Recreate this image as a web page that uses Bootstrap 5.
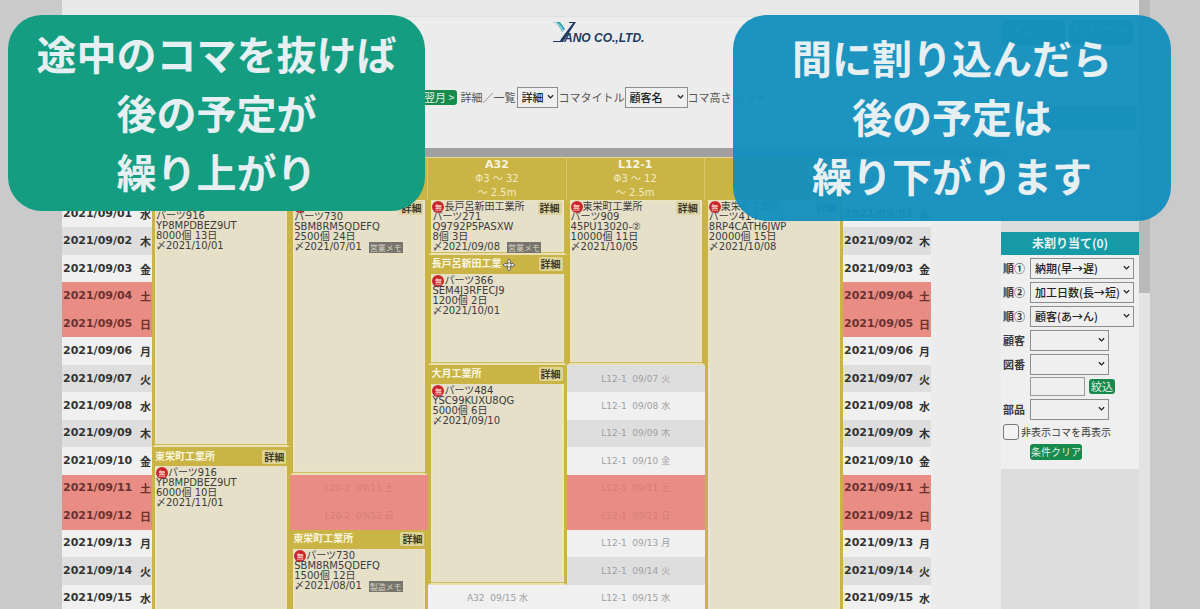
<!DOCTYPE html>
<html lang="ja">
<head>
<meta charset="utf-8">
<meta name="viewport" content="width=device-width, initial-scale=1">
<title>YANO CO.,LTD. 生産予定表</title>
<link href="https://cdn.jsdelivr.net/npm/bootstrap@5.3.0/dist/css/bootstrap.min.css" rel="stylesheet">
<script src="https://cdn.jsdelivr.net/npm/bootstrap@5.3.0/dist/js/bootstrap.bundle.min.js"></script>
<style>
:root { --gold: #c9b445; --cream: #e6e0c9; --weekend: #e98c83; --jp: "Noto Sans CJK JP", sans-serif; }
body { background: #cacaca; font-family: "DejaVu Sans", var(--jp); font-size: 11px; line-height: 16px; color: #3c3c3c; }
.page-frame { margin: 0 50px 0 62px; }
.page-body { background: #ececec; }
.scroll-track { width: 11px; background: #e3e3e3; }
.scroll-thumb { height: 293px; background: #b9b9b9; }
.browser-strip { height: 17px; background: #e8e8e8; border-bottom: 1px solid #e0e0e0; }
.site-head { height: 131px; }
.logo { width: 92px; height: 24px; top: 4px; left: 490px; }
.head-btns { top: 3px; right: 6px; }
.head-btns .btn { width: 64px; height: 25px; font-size: 11px; background: #3f8f7a; border-color: #3f8f7a; }
.tool-row { left: 360px; top: 69px; font-family: var(--jp); height: 22px; color: #555; white-space: nowrap; }
.btn-go { background: #178a4e; color: #e4f0e6; font-family: var(--jp); font-size: 11px; line-height: 15px; padding: 0 2px; border: 0; border-radius: 3px; }
.pick { appearance: none; border: 1px solid #8d8d8d; border-radius: 0; color: #222; height: 21px; padding: 0 12px 0 4px; font-family: var(--jp); font-size: 11px; font-weight: 500; line-height: 16px;
  background: #efefef url("data:image/svg+xml,%3Csvg xmlns='http://www.w3.org/2000/svg' viewBox='0 0 8 6'%3E%3Cpath d='M1 1l3 3 3-3' fill='none' stroke='%23222' stroke-width='1.5'/%3E%3C/svg%3E") no-repeat right 3px center / 7px 6px; }
.pick-mode { width: 41px; margin: 0 1px; }
.pick-title { width: 63px; }
.pick-height { width: 36px; padding-left: 1px; border-color: #ececec; background-color: #ececec; color: #777; }
.plan { border-top: 9px solid #a0a0a0; padding-right: 70px; }
.plan-grid { display: grid; grid-template-columns: 90px repeat(5, minmax(0, 1fr)) 88px; }
.machine { background: var(--gold); color: #f1ebc5; height: 43px; border-top: 1px solid #e2d89b; border-right: 1px solid #d6c76f; text-align: center; font-size: 10px; line-height: 14px; }
.machine b { display: block; font-size: 11px; line-height: 14px; color: #f7f4e2; }
.lane { display: grid; grid-template-rows: repeat(15, minmax(0, 1fr)); height: 412px; }
.day { background: #f0f0f0; color: #333; font-size: 11px; font-weight: 700; padding: 0 1px; }
.day span { font-family: var(--jp); font-size: 11px; line-height: 14px; }
.day.alt, .slot.alt { background: #dedede; }
.day.off, .slot.off { background: var(--weekend); }
.day.off { color: #6b3230; }
.slot { background: #f0f0f0; color: #a0a0a0; font-size: 9px; white-space: pre; }
.slot.off { color: #d67f78; }
.job { background: var(--cream); border: solid var(--gold); border-width: 0 3px 2px; border-bottom-color: #e9e1b3; box-shadow: inset 0 -1px 0 #cdbb5e, inset 0 0 0 2px #ebe4c4; font-size: 10px; line-height: 10px; overflow: hidden; min-height: 0; }
.job-head { background: var(--gold); height: 19px; color: #faf6e0; font-weight: 700; padding: 0 1px 0 0; }
.job-text { padding: 1px 0 0 1px; white-space: nowrap; }
.job-open { border: 0; border-radius: 2px; background: #dfd498; color: #3d3929; font: 700 10px/14px var(--jp); padding: 0 2px; }
.job-first .job-open { float: right; margin: 1px 2px 0 0; background: #dcd3a4; }
.stamp { display: inline-block; width: 12px; height: 12px; margin: 0 0 -4px; border-radius: 50%; background: #c9252b; color: #f3b9b5; font: 700 7px/12px var(--jp); text-align: center; }
.memo { display: inline-block; background: #77756b; color: #d5d2c4; font: 8px/11px var(--jp); padding: 0 1px; margin-left: 7px; vertical-align: top; }
.move-mark { width: 12px; height: 12px; left: 72px; top: 4px; }
.side { width: 138px; background: #dddddd; }
.side-gap { height: 84px; }
.side-title { background: #169aa5; color: #e5f3f3; height: 23px; font: 700 12px/22px var(--jp); text-align: center; margin: 0; }
.side-form { background: #efefef; height: 214px; font-family: var(--jp); padding: 1px 2px 0; }
.side-form .field { display: grid; grid-template-columns: 27px auto; justify-content: start; align-items: center; height: 24px; font-weight: 700; }
.side-form .field-short { height: 21px; }
.side-form .wide { width: 104px; }
.side-form .mid { width: 79px; }
.side-form input[type=text] { width: 55px; height: 19px; border: 1px solid #9a9a9a; background: #efefef; }
.side-form input[type=checkbox] { width: 16px; height: 16px; margin: 0 2px 0 0; border: 1px solid #777; border-radius: 3px; appearance: none; background: #f3f3f3; }
.side-form .check-row { height: 22px; font-size: 10px; }
.side-form .clear-btn { margin-left: 27px; font-size: 10px; line-height: 16px; padding: 0 1px; }
.tail-bar { top: 106px; right: 2px; width: 106px; height: 24px; background: #6fa5a0; }
.callouts { top: 15px; padding: 0 29px 0 8px; gap: 308px; pointer-events: none; }
.callout { border-radius: 34px; color: #e6eff2; font: 700 40px/59px var(--jp); text-align: center; white-space: nowrap; margin: 0; }
.callout-up { flex: 417 1 0; height: 196px; padding-top: 9px; background: #149d80; }
.callout-down { flex: 438 1 0; height: 206px; padding-top: 13px; background: rgba(20, 144, 189, .96); }
</style>
</head>
<body>
<div class="position-relative vh-100 overflow-hidden">
  <div class="page-frame d-flex">
    <div class="page-body flex-grow-1 position-relative">
      <div class="browser-strip"></div>
      <div class="tail-bar position-absolute"></div>
      <header class="site-head position-relative">
        <svg class="logo position-absolute" viewBox="0 0 92 24" role="img" aria-label="YANO CO.,LTD.">
          <path d="M1 1h7l5 7-3 3C8 6 5 2 1 1z" fill="#2ba7b5"/><path d="M3 1c4 2 6 5 8 9" stroke="#ececec" fill="none"/>
          <path d="M24 1h-7v1h4L9 18l-1 2H1v1h10L24 1z" fill="#203a63"/>
          <text x="12" y="21" font-family="Liberation Sans, sans-serif" font-style="italic" font-weight="700" font-size="12" fill="#203a63">ANO CO.,LTD.</text>
        </svg>
        <div class="head-btns position-absolute d-flex gap-1"><button class="btn btn-success p-0">メニュー</button><button class="btn btn-success p-0">ログアウト</button></div>
        <div class="tool-row position-absolute d-flex align-items-center">
          <button class="btn-go me-1">翌月 &gt;</button>
          <label for="mode">詳細／一覧</label><select id="mode" class="pick pick-mode"><option>詳細</option></select>
          <label for="ttl">コマタイトル</label><select id="ttl" class="pick pick-title"><option>顧客名</option></select>
          <label for="hgt">コマ高さ</label><select id="hgt" class="pick pick-height"><option>ット</option></select>
        </div>
      </header>
      <main class="d-flex">
        <section class="plan flex-grow-1">
          <div class="plan-grid" id="plan"></div>
        </section>
        <aside class="side">
          <div class="side-gap"></div>
          <h2 class="side-title">未割り当て(0)</h2>
          <form class="side-form">
            <div class="field"><label for="s1">順①</label><select id="s1" class="pick wide"><option>納期(早→遅)</option></select></div>
            <div class="field"><label for="s2">順②</label><select id="s2" class="pick wide"><option>加工日数(長→短)</option></select></div>
            <div class="field"><label for="s3">順③</label><select id="s3" class="pick wide"><option>顧客(あ→ん)</option></select></div>
            <div class="field"><label for="s4">顧客</label><select id="s4" class="pick mid"><option></option></select></div>
            <div class="field"><label for="s5">図番</label><select id="s5" class="pick mid"><option></option></select></div>
            <div class="field field-short"><span></span><div class="d-flex align-items-center gap-1"><input type="text" aria-label="図番"><button type="button" class="btn-go">絞込</button></div></div>
            <div class="field"><label for="s6">部品</label><select id="s6" class="pick mid"><option></option></select></div>
            <div class="check-row d-flex align-items-center"><input type="checkbox" id="hid"><label for="hid">非表示コマを再表示</label></div>
            <button type="button" class="btn-go clear-btn">条件クリア</button>
          </form>
        </aside>
      </main>
    </div>
    <div class="scroll-track"><div class="scroll-thumb"></div></div>
  </div>
  <div class="callouts position-absolute start-0 end-0 d-flex align-items-start">
    <p class="callout callout-up">途中のコマを抜けば<br>後の予定が<br>繰り上がり</p>
    <p class="callout callout-down">間に割り込んだら<br>後の予定は<br>繰り下がります</p>
  </div>
</div>
<script>
const week = ["水","木","金","土","日","月","火"];
const pad = n => String(n).padStart(2, "0");
const tone = d => [4, 5, 11, 12].includes(d) ? "off" : [2, 7, 9, 14].includes(d) ? "alt" : "";
const days = () => Array.from({length: 15}, (_, i) => `<div class="day ${tone(i + 1)} d-flex align-items-center justify-content-between">2021/09/${pad(i + 1)}<span>${week[i % 7]}</span></div>`).join("");
const slots = (name, from, to) => { let h = ""; for (let d = from; d <= to; d++) h += `<div class="slot ${tone(d)} d-flex align-items-center justify-content-center">${name}  09/${pad(d)} ${week[(d - 1) % 7]}</div>`; return h; };
const moveMark = '<svg class="move-mark position-absolute" viewBox="0 0 12 12"><path d="M6 0l2 3H7v2h2V4l3 2-3 2V7H7v2h1l-2 3-2-3h1V7H3v1L0 6l3-2v1h2V3H4z" fill="#f4f4f4" stroke="#444" stroke-width=".7"/></svg>';
const job = (span, first, who, part, code, qty, due, memo, moving) => {
  const open = '<button class="job-open">詳細</button>', stamp = '<span class="stamp">無</span>';
  const tail = `${code}<br>${qty}<br>〆${due}${memo ? `<span class="memo">${memo}</span>` : ""}`;
  return `<article class="job ${first ? "job-first" : ""}" style="grid-row: span ${span}">` + (first
    ? `${who ? open : ""}<div class="job-text">${who ? stamp + who : "&nbsp;"}<br>${part}<br>${tail}</div>`
    : `<div class="job-head position-relative d-flex align-items-center justify-content-between">${who}${moving ? moveMark : ""}${open}</div><div class="job-text">${stamp}${part}<br>${tail}</div>`) + "</article>";
};
const lanes = [
  ["", "", job(9, 1, "", "パーツ916", "YP8MPDBEZ9UT", "8000個 13日", "2021/10/01") + job(6, 0, "東栄町工業所", "パーツ916", "YP8MPDBEZ9UT", "6000個 10日", "2021/11/01")],
  ["", "", job(10, 1, " ", "パーツ730", "SBM8RM5QDEFQ", "2500個 24日", "2021/07/01", "営業メモ") + slots("L20-2", 11, 12) + job(3, 0, "東栄町工業所", "パーツ730", "SBM8RM5QDEFQ", "1500個 12日", "2021/08/01", "製造メモ")],
  ["A32", "Φ3 ～ 32<br>～ 2.5m", job(2, 1, "長戸呂新田工業所", "パーツ271", "Q9792P5PASXW", "8個 3日", "2021/09/08", "営業メモ") + job(4, 0, "長戸呂新田工業", "パーツ366", "SEM4J3RFECJ9", "1200個 2日", "2021/10/01", "", true) + job(8, 0, "大月工業所", "パーツ484", "YSC99KUXU8QG", "5000個 6日", "2021/09/10") + slots("A32", 15, 15)],
  ["L12-1", "Φ3 ～ 12<br>～ 2.5m", job(6, 1, "東栄町工業所", "パーツ909", "45PU13020-②", "10000個 11日", "2021/10/05") + slots("L12-1", 7, 15)],
  ["", "", job(15, 1, "東栄町工業所", "パーツ414", "8RP4CATH6JWP", "20000個 15日", "2021/10/08")]
];
document.getElementById("plan").innerHTML =
  "<div></div>" + lanes.map(l => `<div class="machine"><b>${l[0]}</b>${l[1]}</div>`).join("") + "<div></div>" +
  `<div class="lane">${days()}</div>` + lanes.map(l => `<div class="lane">${l[2]}</div>`).join("") + `<div class="lane">${days()}</div>`;
</script>
</body>
</html>
